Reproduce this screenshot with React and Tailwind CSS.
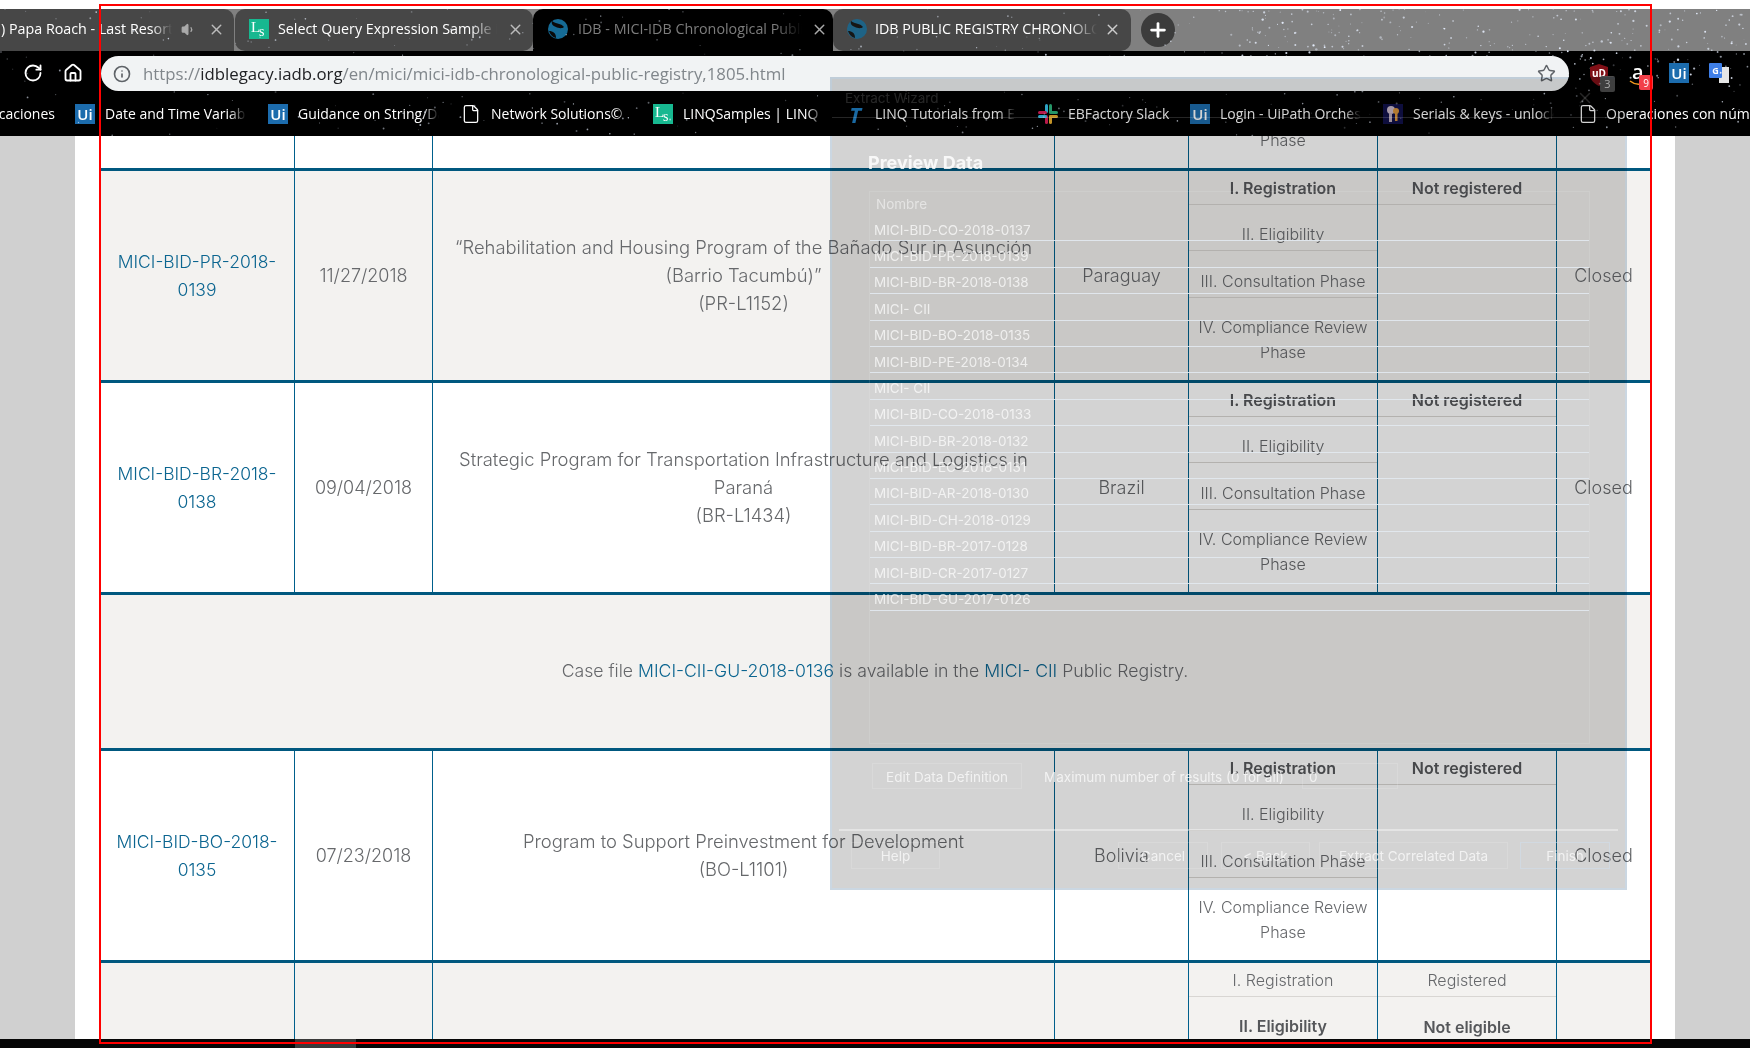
import React from "react";
import { RotateCw, Home, Info, Star, Volume1, X, Plus, File } from "lucide-react";

// star field painted over the browser chrome (theme background)
const makeStars = () => {
  let seed = 71;
  const rnd = () => {
    seed = (seed * 16807) % 2147483647;
    return seed / 2147483647;
  };
  const stars = [];
  for (let i = 0; i < 420; i++) {
    stars.push({ x: rnd() * 1750, y: 9 + rnd() * 127, r: 0.4 + rnd() * 0.6, o: 0.2 + rnd() * 0.6 });
  }
  for (let i = 0; i < 260; i++) {
    stars.push({ x: 1230 + rnd() * 520, y: 9 + rnd() * 70, r: 0.4 + rnd() * 0.8, o: 0.4 + rnd() * 0.6 });
  }
  return stars;
};
const stars = makeStars();

const Stars = () => (
  <svg className="absolute left-0 top-0 pointer-events-none" width="1750" height="136">
    {stars.map((s, i) => (
      <circle key={i} cx={s.x} cy={s.y} r={s.r} fill="#e8f0ff" opacity={s.o} />
    ))}
  </svg>
);

const UiIcon = () => (
  <span className="w-5 h-5 shrink-0 bg-[#1c6cad] text-white text-[15px] font-semibold leading-5 text-center font-['Open_Sans',sans-serif]">
    Ui
  </span>
);

const LsIcon = () => (
  <span className="w-5 h-5 shrink-0 bg-[#17b890] text-white relative block font-['Liberation_Serif',serif]">
    <span className="absolute left-[2px] top-[-2px] text-[15px] leading-5">L</span>
    <span className="absolute left-[10px] top-[3px] text-[14px] leading-5">s</span>
  </span>
);

const Globe = ({ dim }) => (
  <svg width="22" height="22" viewBox="0 0 22 22" className={`shrink-0 ${dim ? "opacity-80" : ""}`}>
    <circle cx="11" cy="11" r="10" fill="#156b96" />
    <path d="M5 3 C9 6 14 5 17 9 C15 11 11 10 9 9 C6 8 4 6 5 3Z" fill="#0a0a0a" />
    <path d="M2 13 C6 13 9 15 9 20 C5 19 3 16 2 13Z" fill="#0a0a0a" />
  </svg>
);

const SlackIcon = () => (
  <svg width="20" height="20" viewBox="0 0 20 20" className="shrink-0">
    <rect x="7" y="0" width="3" height="9" rx="1.5" fill="#36c5f0" />
    <rect x="0" y="7" width="9" height="3" rx="1.5" fill="#e01e5a" />
    <rect x="11" y="0" width="3" height="9" rx="1.5" fill="#2eb67d" />
    <rect x="11" y="7" width="9" height="3" rx="1.5" fill="#2eb67d" />
    <rect x="11" y="11" width="9" height="3" rx="1.5" fill="#ecb22e" />
    <rect x="11" y="11" width="3" height="9" rx="1.5" fill="#ecb22e" />
    <rect x="7" y="11" width="3" height="9" rx="1.5" fill="#e01e5a" />
    <rect x="0" y="11" width="9" height="3" rx="1.5" fill="#36c5f0" />
  </svg>
);

const KeysIcon = () => (
  <svg width="20" height="20" viewBox="0 0 20 20" className="shrink-0">
    <rect width="20" height="20" fill="#10104a" />
    <circle cx="8" cy="6" r="4" fill="#c9b8c8" />
    <rect x="6" y="9" width="3" height="9" fill="#b9a8b8" />
    <circle cx="13" cy="7" r="3" fill="#d9933a" />
    <rect x="12" y="9" width="2.5" height="8" fill="#d9933a" />
  </svg>
);

const Tab = ({ className, title, titleClass = "text-white", icon, titleWidth, children }) => (
  <div className={`h-[42px] flex items-center shrink-0 pb-[2px] ${className}`}>
    {icon}
    <span
      className={`whitespace-nowrap overflow-hidden text-[14.3px] [mask-image:linear-gradient(to_right,black_88%,transparent)] ${titleClass} ${titleWidth}`}
    >
      {title}
    </span>
    {children}
  </div>
);

const TabStrip = () => (
  <div className="h-[42px] shrink-0 bg-[#808080] flex font-['Open_Sans',sans-serif]">
    <Tab
      className="w-[234px] bg-[#474747] rounded-tr-[10px] pl-[1px]"
      title=") Papa Roach - Last Resort"
      titleWidth="w-[171px]"
    >
      <Volume1 size={15} className="ml-[9px] text-[#aaa] fill-[#aaa]" />
      <X size={17} strokeWidth={2} className="ml-[12px] text-[#bbb]" />
    </Tab>
    <Tab
      className="w-[298px] ml-px bg-[#474747] rounded-[10px] pl-[14px]"
      title="Select Query Expression Sample in"
      titleWidth="w-[219px] ml-[9px]"
      icon={<LsIcon />}
    >
      <X size={17} strokeWidth={2} className="ml-[10px] text-[#bbb]" />
    </Tab>
    <Tab
      className="w-[300px] bg-black rounded-t-[10px] pl-[14px]"
      title="IDB - MICI-IDB Chronological Public"
      titleClass="text-[#7d7d7d]"
      titleWidth="w-[224px] ml-[9px]"
      icon={<Globe />}
    >
      <X size={17} strokeWidth={2} className="ml-[9px] text-[#aaa]" />
    </Tab>
    <Tab
      className="w-[298px] bg-[#474747] rounded-[10px] pl-[13px]"
      title="IDB PUBLIC REGISTRY CHRONOLOGICAL"
      titleWidth="w-[222px] ml-[7px]"
      icon={<Globe dim />}
    >
      <X size={17} strokeWidth={2} className="ml-[7px] text-[#ccc]" />
    </Tab>
    <div className="ml-[10px] mt-[4px] w-[34px] h-[34px] rounded-full bg-[#3c3c3c] flex items-center justify-center">
      <Plus size={22} strokeWidth={3} className="text-white" />
    </div>
  </div>
);

const Extensions = () => (
  <div className="flex items-start ml-[20px] pt-[8px]">
    <div className="relative w-[20px] h-[22px]">
      <svg width="20" height="22" viewBox="0 0 20 22">
        <path d="M10 0 L19 3 V11 C19 16 14 20 10 22 C6 20 1 16 1 11 V3Z" fill="#800f16" />
      </svg>
      <span className="absolute left-[3px] top-[3px] text-[10px] leading-3 font-bold text-white">uD</span>
      <span className="absolute left-[11px] top-[12px] w-[15px] h-[16px] bg-[#4c4c4c] rounded-[2px] text-[11px] leading-4 text-center text-[#ccc]">
        3
      </span>
    </div>
    <div className="relative w-[20px] h-[22px] ml-[20px]">
      <span className="absolute left-[3px] top-[-4px] text-[20px] leading-6 font-semibold text-white">a</span>
      <svg className="absolute left-0 top-[16px]" width="20" height="6" viewBox="0 0 20 6">
        <path d="M1 1 C6 5 12 5 17 2" fill="none" stroke="#f29a1e" strokeWidth="1.5" />
      </svg>
      <span className="absolute left-[10px] top-[11px] w-[14px] h-[15px] bg-[#f2404a] rounded-[2px] text-[10px] leading-4 text-center text-white">
        9
      </span>
    </div>
    <div className="ml-[20px] -mt-[1px] flex">
      <UiIcon />
    </div>
    <div className="relative ml-[20px] -mt-[1px] w-5 h-5">
      <span className="absolute left-[10px] top-[4px] w-[10px] h-[16px] bg-[#e6e6e6]" />
      <span className="absolute left-0 top-0 w-[13px] h-[15px] rounded-[1px] bg-[#3f7fe8] text-white text-[9px] leading-[15px] text-center font-bold">
        G
      </span>
    </div>
  </div>
);

const Toolbar = () => (
  <div className="h-[40px] shrink-0 bg-black flex items-start pl-[23px] pt-[5px] font-['Open_Sans',sans-serif]">
    <RotateCw size={20} strokeWidth={2.2} className="text-white mt-[7px]" />
    <Home size={20} strokeWidth={2.2} className="text-white ml-[20px] mt-[7px]" />
    <div className="relative z-10 ml-[18px] w-[1468px] h-[35px] bg-[#f1f3f4] rounded-full flex items-center pl-[12px]">
      <Info size={18} strokeWidth={2.2} className="text-[#5f6368]" />
      <span className="ml-[12px] text-[16.8px] text-[#80868b] whitespace-nowrap">
        https://<span className="text-[#202124]">idblegacy.iadb.org</span>
        /en/mici/mici-idb-chronological-public-registry,1805.html
      </span>
      <Star size={19} strokeWidth={1.8} className="ml-auto mr-[13px] text-[#5f6368]" />
    </div>
    <Extensions />
  </div>
);

const Bookmark = ({ icon, label, width }) => (
  <div className={`flex items-center shrink-0 ${width}`}>
    {icon}
    <span className="ml-[10px] w-[141px] overflow-hidden whitespace-nowrap text-[14px] text-white [mask-image:linear-gradient(to_right,black_88%,transparent)]">
      {label}
    </span>
  </div>
);

const Bookmarks = () => (
  <div className="h-[45px] shrink-0 bg-black flex items-center font-['Open_Sans',sans-serif]">
    <div className="w-[75px] shrink-0 flex justify-end pr-[20px] overflow-hidden">
      <span className="text-[14px] text-white whitespace-nowrap">Aplicaciones</span>
    </div>
    <Bookmark width="w-[193px]" icon={<UiIcon />} label="Date and Time Variables" />
    <Bookmark width="w-[193px]" icon={<UiIcon />} label="Guidance on String/Date" />
    <Bookmark
      width="w-[192px]"
      icon={<File size={20} strokeWidth={1.5} className="text-white shrink-0" />}
      label="Network Solutions©"
    />
    <Bookmark width="w-[192px]" icon={<LsIcon />} label="LINQSamples | LINQ" />
    <Bookmark
      width="w-[193px]"
      icon={
        <span className="w-5 shrink-0 text-[22px] leading-5 font-bold italic text-[#1e7fc4] text-center">T</span>
      }
      label="LINQ Tutorials from Experts"
    />
    <Bookmark width="w-[152px]" icon={<SlackIcon />} label="EBFactory Slack" />
    <Bookmark width="w-[193px]" icon={<UiIcon />} label="Login - UiPath Orchestrator" />
    <Bookmark width="w-[193px]" icon={<KeysIcon />} label="Serials & keys - unlock" />
    <div className="flex items-center shrink-0 ml-[2px]">
      <File size={20} strokeWidth={1.5} className="text-white shrink-0" />
      <span className="ml-[8px] text-[14px] text-white whitespace-nowrap">Operaciones con núm</span>
    </div>
  </div>
);

const cell = "border-l border-[#00608c] flex items-center justify-center text-center";

const Stage = ({ label, bold, className, twoLine }) => (
  <div className={`flex items-center justify-center px-1 text-[16px] leading-[25px] ${bold ? "font-semibold text-[#55575a]" : ""} ${className}`}>
    {twoLine ? (
      <span>
        {label}
        <br />
        Phase
      </span>
    ) : (
      label
    )}
  </div>
);

const Stages = ({ boldRow = 0, first, second }) => (
  <>
    <div className="border-l border-[#00608c] flex flex-col text-center">
      <Stage label="I. Registration" bold={boldRow === 0} className="h-[34px] shrink-0 border-b border-[#d8d6d3] pt-[2px]" />
      <Stage label="II. Eligibility" bold={boldRow === 1} className="h-[46px] shrink-0 border-b border-[#d8d6d3] pt-[14px]" />
      <Stage label="III. Consultation Phase" className="h-[47px] shrink-0 border-b border-[#d8d6d3] pt-[15px]" />
      <Stage label="IV. Compliance Review" twoLine className="flex-1 pt-[2px]" />
    </div>
    <div className="border-l border-[#00608c] flex flex-col text-center">
      <Stage label={first} bold={boldRow === 0} className="h-[34px] shrink-0 border-b border-[#d8d6d3] pt-[2px]" />
      {second && <Stage label={second} bold className="h-[46px] shrink-0 pt-[14px]" />}
    </div>
  </>
);

const Row = ({ id, date, title, code, country, bg, height, ...rest }) => (
  <div className={`grid grid-cols-[194px_138px_622px_134px_189px_179px_94px] shrink-0 border-t-[3px] border-[#00587f] text-[18px] leading-7 ${bg} ${height}`}>
    <div className="flex items-center justify-center text-center text-[#0b6590] px-2 text-[17.5px]">{id}</div>
    <div className={cell}>{date}</div>
    <div className={`${cell} px-5 pb-[2px]`}>
      <span className="text-[18.4px]">
        {title}
        <br />
        {code}
      </span>
    </div>
    <div className={cell}>{country}</div>
    <Stages {...rest} />
    <div className={cell}>{country && "Closed"}</div>
  </div>
);

const Table = () => (
  <div className="flex-1 min-h-0 bg-[#d0d0d0] overflow-hidden">
    <div className="w-[1600px] mx-auto h-full bg-white px-[25px] flex flex-col text-[#66686b] font-['Inter',sans-serif] font-light">
      <div className="grid grid-cols-[194px_138px_622px_134px_189px_179px_94px] h-[32px] shrink-0 text-[16px]">
        <div />
        <div className={cell} />
        <div className={cell} />
        <div className={cell} />
        <div className="border-l border-[#00608c] flex justify-center items-start leading-[25px]">
          <span className="-mt-[8px]">Phase</span>
        </div>
        <div className={cell} />
        <div className={cell} />
      </div>
      <Row
        id="MICI-BID-PR-2018-0139"
        date="11/27/2018"
        title="“Rehabilitation and Housing Program of the Bañado Sur in Asunción (Barrio Tacumbú)”"
        code="(PR-L1152)"
        country="Paraguay"
        bg="bg-[#f3f2f0]"
        height="h-[212px]"
        first="Not registered"
      />
      <Row
        id="MICI-BID-BR-2018-0138"
        date="09/04/2018"
        title="Strategic Program for Transportation Infrastructure and Logistics in Paraná"
        code="(BR-L1434)"
        country="Brazil"
        bg="bg-white"
        height="h-[212px]"
        first="Not registered"
      />
      <div className="h-[156px] shrink-0 border-t-[3px] border-[#00587f] bg-[#f3f2f0] flex items-center justify-center text-[17.65px]">
        <span>
          Case file <span className="text-[#0b6590]">MICI-CII-GU-2018-0136</span> is available in the{" "}
          <span className="text-[#0b6590]">MICI- CII</span> Public Registry.
        </span>
      </div>
      <Row
        id="MICI-BID-BO-2018-0135"
        date="07/23/2018"
        title="Program to Support Preinvestment for Development"
        code="(BO-L1101)"
        country="Bolivia"
        bg="bg-white"
        height="h-[212px]"
        first="Not registered"
      />
      <Row bg="bg-[#f3f2f0]" height="h-[212px]" boldRow={1} first="Registered" second="Not eligible" />
    </div>
  </div>
);

const registry = [
  "MICI-BID-CO-2018-0137",
  "MICI-BID-PR-2018-0139",
  "MICI-BID-BR-2018-0138",
  "MICI- CII",
  "MICI-BID-BO-2018-0135",
  "MICI-BID-PE-2018-0134",
  "MICI- CII",
  "MICI-BID-CO-2018-0133",
  "MICI-BID-BR-2018-0132",
  "MICI-BID-EC-2018-0131",
  "MICI-BID-AR-2018-0130",
  "MICI-BID-CH-2018-0129",
  "MICI-BID-BR-2017-0128",
  "MICI-BID-CR-2017-0127",
  "MICI-BID-GU-2017-0126",
];

const GhostButton = ({ label, className }) => (
  <div className={`h-[27px] shrink-0 border border-white/15 flex items-center justify-center pt-[2px] ${className}`}>{label}</div>
);

// the half transparent wizard window lying over the page: shade first, its contents on top
const WizardShade = () => (
  <div className="absolute left-[830px] top-[77px] w-[797px] h-[813px] bg-[#d3d3d3] border-2 border-[#cbd7e2] mix-blend-multiply z-20 pointer-events-none" />
);

const Wizard = () => (
  <div className="absolute left-[830px] top-[77px] w-[797px] h-[813px] p-[2px] z-20 pointer-events-none flex flex-col font-['Inter',sans-serif] text-[13.5px] text-white/70">
    <div className="h-[39px] shrink-0 border-b border-white/15 flex items-center justify-between px-[13px] text-white/15">
      <span>Extract Wizard</span>
      <X size={18} className="mr-[18px]" />
    </div>
    <div className="h-[73px] shrink-0 pl-[36px] pt-[33px] text-[18px] leading-6 font-bold text-white/85">Preview Data</div>
    <div className="ml-[37px] w-[721px] h-[553px] shrink-0 border border-white/10">
      <div className="h-[23px] flex items-center pl-[6px] pt-[2px] text-white/50">Nombre</div>
      {registry.map((name, i) => (
        <div key={i} className="h-[26.4px] border-b border-[#e2e9f0]/90 flex items-center pl-[4px] pt-[4px]">
          {name}
        </div>
      ))}
    </div>
    <div className="mt-[19px] h-[26px] flex items-center shrink-0 pl-[40px]">
      <GhostButton label="Edit Data Definition" className="w-[150px] !h-[26px]" />
      <span className="ml-[22px] w-[258px] whitespace-nowrap pt-[2px]">Maximum number of results (0 for all)</span>
      <div className="h-[26px] w-[96px] border border-white/15 flex items-center pl-[6px] pt-[2px]">0</div>
    </div>
    <div className="mt-[40px] mx-[7px] h-[2px] shrink-0 bg-white/40" />
    <div className="mt-[11px] flex shrink-0">
      <GhostButton label="Help" className="ml-[19px] w-[89px]" />
      <GhostButton label="Cancel" className="ml-[178px] w-[90px]" />
      <GhostButton label="< Back" className="ml-[13px] w-[89px]" />
      <GhostButton label="Extract Correlated Data" className="ml-[9px] w-[189px]" />
      <GhostButton label="Finish" className="ml-[12px] w-[90px] !border-[#cfe0f0]/50" />
    </div>
  </div>
);

const App = () => (
  <div className="relative w-[1750px] h-[1048px] overflow-hidden flex flex-col bg-white">
    <div className="h-[9px] shrink-0 bg-white" />
    <TabStrip />
    <Toolbar />
    <Bookmarks />
    <Stars />
    <Table />
    <div className="h-[9px] shrink-0 bg-[#060606] pl-[295px]">
      <div className="w-[61px] h-full bg-[#3a3a3a]" />
    </div>
    <WizardShade />
    <Wizard />
    {/* red selection frame */}
    <div className="absolute left-[99px] top-[4px] w-[1553px] h-[1040px] border-2 border-[#ff0000] z-30 pointer-events-none" />
  </div>
);

export default App;
